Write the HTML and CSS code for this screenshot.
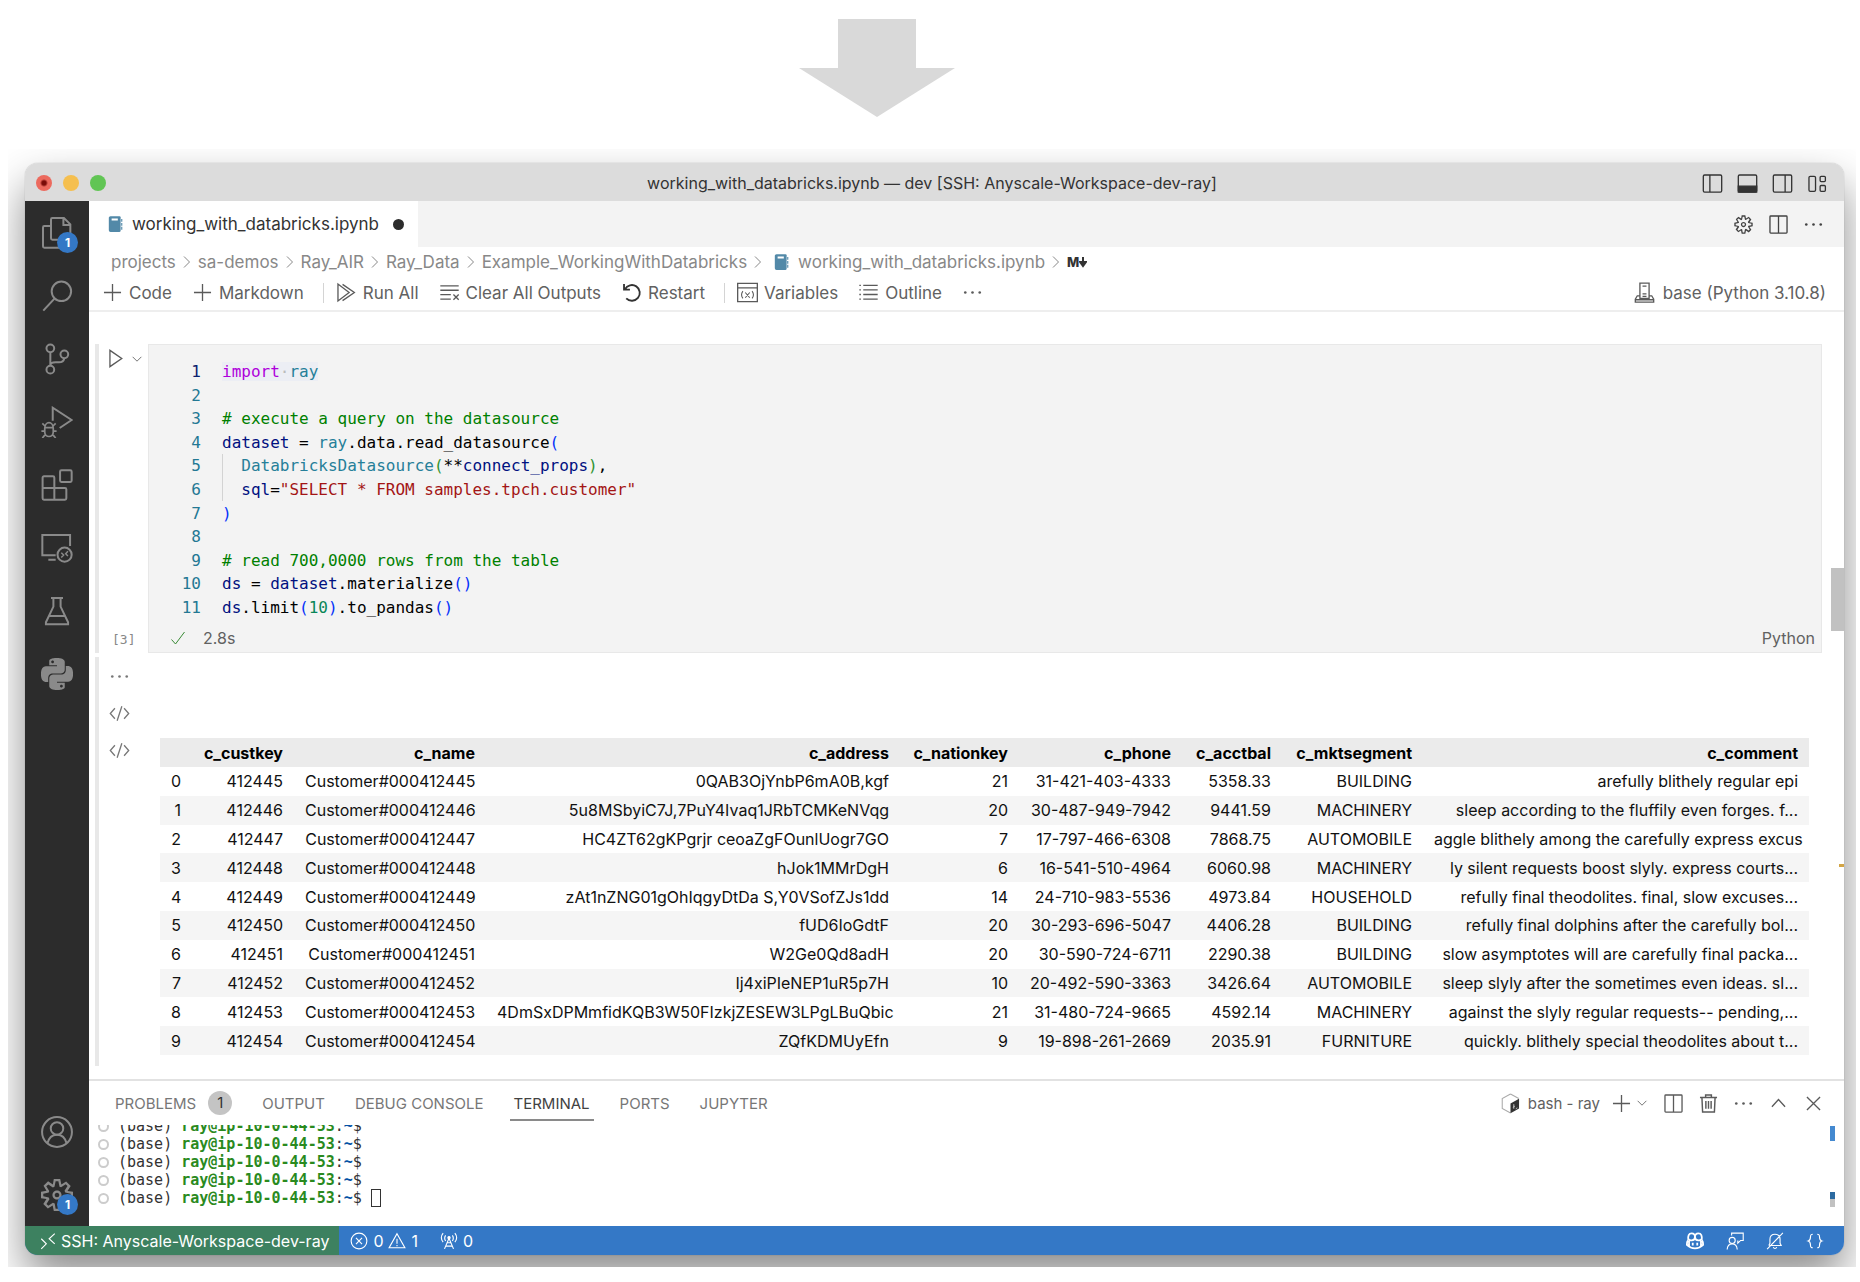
FILE: index.html
```html
<!DOCTYPE html>
<html lang="en">
<head>
  <meta charset="UTF-8">
  <title>working_with_databricks.ipynb — dev</title>
  <link rel="stylesheet" href="styles.css">
</head>
<body>

<!-- shared icons -->
<svg class="sprite" aria-hidden="true">
  <symbol id="i-gear" viewBox="0 0 16 16"><path fill="currentColor" stroke="none" fill-rule="evenodd" d="M9.1 4.4L8.6 2H7.4l-.5 2.4-.7.3-2-1.3-.9.8 1.3 2-.2.7-2.4.5v1.2l2.4.5.3.8-1.3 2 .8.8 2-1.3.8.3.4 2.3h1.2l.5-2.4.8-.3 2 1.3.8-.8-1.3-2 .3-.8 2.3-.4V7.4l-2.4-.5-.3-.8 1.3-2-.8-.8-2 1.3-.7-.2zM9.4 1l.5 2.4L12 2.1l2 2-1.4 2.1 2.4.4v2.8l-2.4.5L14 12l-2 2-2.1-1.4-.5 2.4H6.6l-.5-2.4L4 13.9l-2-2 1.4-2.1L1 9.4V6.6l2.4-.5L2.1 4l2-2 2.1 1.4.4-2.4h2.8zm.6 7c0 1.1-.9 2-2 2s-2-.9-2-2 .9-2 2-2 2 .9 2 2zM8 9c.6 0 1-.4 1-1s-.4-1-1-1-1 .4-1 1 .4 1 1 1z"/></symbol>
  <symbol id="i-split" viewBox="0 0 16 16"><rect x="1.5" y="1.5" width="13" height="13" rx=".6"/><path d="M8 1.5v13"/></symbol>
  <symbol id="i-dots" viewBox="0 0 16 16"><g fill="currentColor" stroke="none"><circle cx="2.5" cy="8" r="1"/><circle cx="8" cy="8" r="1"/><circle cx="13.5" cy="8" r="1"/></g></symbol>
  <symbol id="i-plus" viewBox="0 0 16 16"><path d="M8 1.5v13M1.5 8h13"/></symbol>
  <symbol id="i-down" viewBox="0 0 16 16"><path d="M3 5.5l5 5 5-5"/></symbol>
  <symbol id="i-sep" viewBox="0 0 16 16"><path d="M5 2.5L10.500 8 5 13.500"/></symbol>
  <symbol id="i-book" viewBox="0 0 16 16"><g fill="#5289a8" stroke="none"><path d="M4 1h8a1 1 0 0 1 1 1v12a1 1 0 0 1-1 1H4a1.500 1.500 0 0 1-1.500-1.500v-11A1.500 1.500 0 0 1 4 1z"/><path d="M13.500 3.500h1v2.500h-1zM13.500 7h1v2.500h-1zM13.500 10.500h1V13h-1z"/></g><path d="M5 4h5.500" stroke="#fff" stroke-width="1.800"/></symbol>
  <symbol id="i-code" viewBox="0 0 16 16"><path d="M4.500 4L1 8l3.500 4M11.500 4L15 8l-3.500 4M9.800 2.500l-3.600 11"/></symbol>
</svg>

<div class="arrow">
  <svg width="156" height="98" viewBox="0 0 156 98"><path fill="#d9d9d9" d="M39 0h78v49h39L78 98 0 49h39z"/></svg>
</div>

<div class="stage">
<div class="window">

  <header class="titlebar">
    <div class="lights">
      <span class="light red"></span><span class="light yellow"></span><span class="light green"></span>
    </div>
    <div class="title">working_with_databricks.ipynb — dev [SSH: Anyscale-Workspace-dev-ray]</div>
    <div class="layout-btns">
      <button aria-label="Toggle side bar"><svg class="icon" viewBox="0 0 16 16"><rect x="1" y="1.500" width="14" height="13" rx="1"/><path d="M6 1.500v13"/></svg></button>
      <button aria-label="Toggle panel"><svg class="icon" viewBox="0 0 16 16"><rect x="1" y="1.500" width="14" height="13" rx="1"/><path fill="currentColor" d="M1 10h14v4.500H1z"/></svg></button>
      <button aria-label="Toggle secondary side bar"><svg class="icon" viewBox="0 0 16 16"><rect x="1" y="1.500" width="14" height="13" rx="1"/><path d="M10 1.500v13"/></svg></button>
      <button aria-label="Customize layout"><svg class="icon" viewBox="0 0 16 16"><rect x="1.500" y="2.500" width="5" height="11.500" rx="1"/><rect x="10" y="2.500" width="4" height="4" rx=".8"/><rect x="10" y="9.500" width="4" height="4.500" rx=".8"/></svg></button>
    </div>
  </header>

  <div class="main">
    <nav class="activity">
      <button aria-label="Explorer"><svg viewBox="0 0 24 24"><path d="M8.500.8h8.700L22 5.500V16a1 1 0 0 1-1 1H8.500a1 1 0 0 1-1-1V1.800a1 1 0 0 1 1-1zM16.800 1v5H22M7.500 6.800h-5a1 1 0 0 0-1 1V22a1 1 0 0 0 1 1H15a1 1 0 0 0 1-1v-5"/></svg><span class="badge">1</span></button>
      <button aria-label="Search"><svg viewBox="0 0 24 24"><circle cx="15.300" cy="8.500" r="7.300"/><path d="M10.300 13.800L1.700 23"/></svg></button>
      <button aria-label="Source control"><svg viewBox="0 0 24 24"><circle cx="7" cy="4" r="2.900"/><circle cx="7" cy="20" r="2.900"/><circle cx="17.500" cy="8.500" r="2.900"/><path d="M7 7v10M17.500 11.400c-.5 2.300-1.500 3.100-4 3.100H11c-2.500 0-4 1-4 2.500"/></svg></button>
      <button aria-label="Run and debug"><svg viewBox="0 0 24 24"><path d="M8.800 11V1.300L23 10.500l-9 6"/><path d="M2.800 17c0-6 6.400-6 6.400 0v2.500c0 4.500-6.400 4.500-6.400 0zM2.800 16.300h6.400M.3 18.800h2.500M9.200 18.800h2.500M1 13l2 2M11 13l-2 2M1 24l2.200-2.500M11 24l-2.200-2.500" stroke-width="1.300"/></svg></button>
      <button aria-label="Extensions"><svg viewBox="0 0 24 24"><path d="M1.200 6.500a1 1 0 0 1 1-1H9a1 1 0 0 1 1 1v7.700h8a1 1 0 0 1 1 1v6.800a1 1 0 0 1-1 1H2.200a1 1 0 0 1-1-1zM1.200 14.200H10V23"/><rect x="14.300" y="1" width="8.700" height="8.700" rx="1"/></svg></button>
      <button aria-label="Remote explorer"><svg viewBox="0 0 24 24"><path d="M11 17.500H1V2.200h20.800v8.300M5.500 20.800H11"/><circle cx="17.700" cy="17" r="5.300"/><path d="M15.200 15.500l1.800 1.800-1.800 1.800M20.200 14.500l-1.700 1.800 1.700 1.700" stroke-width="1.100"/></svg></button>
      <button aria-label="Testing"><svg viewBox="0 0 24 24"><path d="M7.500 2.200h9M9.300 2.200v6.500L3.700 20.500V22h16.600v-1.500L14.700 8.700V2.200M6.500 15.800h11"/></svg></button>
      <button aria-label="Python"><svg viewBox="0 0 24 24"><path fill="#8a8a8a" stroke="none" d="M14.250.18l.9.2.73.26.59.3.45.32.34.34.25.34.16.33.1.3.04.26.02.2-.01.13V8.500l-.05.63-.13.55-.21.46-.26.38-.3.31-.33.25-.35.19-.35.14-.33.1-.3.07-.26.04-.21.02H8.770l-.69.05-.59.14-.5.22-.41.27-.33.32-.27.35-.2.36-.15.37-.1.35-.07.32-.04.27-.02.21v3.060H3.170l-.21-.03-.28-.07-.32-.12-.35-.18-.36-.26-.36-.36-.35-.46-.32-.59-.28-.73-.21-.88-.14-1.050-.05-1.230.06-1.220.16-1.040.24-.87.32-.71.36-.57.4-.44.42-.33.42-.24.4-.16.36-.1.32-.05.24-.01h.16l.06.01h8.160v-.83H6.180l-.01-2.750-.02-.37.05-.34.11-.31.17-.28.25-.26.31-.23.38-.2.44-.18.51-.15.58-.12.64-.1.71-.06.77-.04.84-.02 1.270.05zm-6.300 1.980l-.23.33-.08.41.08.41.23.34.33.22.41.09.41-.09.33-.22.23-.34.08-.41-.08-.41-.23-.33-.33-.22-.41-.09-.41.09zm13.090 3.950l.28.06.32.12.35.18.36.27.36.35.35.47.32.59.28.73.21.88.14 1.040.05 1.230-.06 1.230-.16 1.040-.24.86-.32.71-.36.57-.4.45-.42.33-.42.24-.4.16-.36.09-.32.05-.24.02-.16-.01h-8.220v.82h5.840l.01 2.760.02.36-.05.34-.11.31-.17.29-.25.25-.31.24-.38.2-.44.17-.51.15-.58.13-.64.09-.71.07-.77.04-.84.01-1.270-.04-1.070-.14-.9-.2-.73-.25-.59-.3-.45-.33-.34-.34-.25-.34-.16-.33-.1-.3-.04-.25-.02-.2.01-.13v-5.340l.05-.64.13-.54.21-.46.26-.38.3-.32.33-.24.35-.2.35-.14.33-.1.3-.06.26-.04.21-.02.13-.01h5.840l.69-.05.59-.14.5-.21.41-.28.33-.32.27-.35.2-.36.15-.36.1-.35.07-.32.04-.28.02-.21V6.070h2.090l.14.01zm-6.470 14.250l-.23.33-.08.41.08.41.23.33.33.23.41.08.41-.08.33-.23.23-.33.08-.41-.08-.41-.23-.33-.33-.23-.41-.08-.41.08z"/></svg></button>
      <span class="spacer"></span>
      <button aria-label="Accounts"><svg viewBox="0 0 24 24"><circle cx="12" cy="12" r="11.200"/><circle cx="12" cy="9.300" r="4.700"/><path d="M4.800 20.500c1-4 3.700-6.500 7.200-6.500s6.200 2.500 7.200 6.500"/></svg></button>
      <button aria-label="Manage"><svg viewBox="0 0 14 14"><use href="#i-gear" x="-1" y="-1" width="16" height="16"/></svg><span class="badge">1</span></button>
    </nav>

    <div class="editor">
      <div class="tabs">
        <div class="tab"><svg class="icon small"><use href="#i-book"/></svg>working_with_databricks.ipynb<span class="dirty"></span></div>
        <div class="tab-actions">
          <button aria-label="Notebook settings"><svg class="icon"><use href="#i-gear"/></svg></button>
          <button aria-label="Split editor"><svg class="icon"><use href="#i-split"/></svg></button>
          <button aria-label="More actions"><svg class="icon"><use href="#i-dots"/></svg></button>
        </div>
      </div>

      <div class="crumbs">
        <a href="#">projects</a><svg class="sep"><use href="#i-sep"/></svg>
        <a href="#">sa-demos</a><svg class="sep"><use href="#i-sep"/></svg>
        <a href="#">Ray_AIR</a><svg class="sep"><use href="#i-sep"/></svg>
        <a href="#">Ray_Data</a><svg class="sep"><use href="#i-sep"/></svg>
        <a href="#">Example_WorkingWithDatabricks</a><svg class="sep"><use href="#i-sep"/></svg>
        <a href="#" class="file"><svg class="icon small"><use href="#i-book"/></svg>working_with_databricks.ipynb</a><svg class="sep"><use href="#i-sep"/></svg>
        <a href="#" class="md">M<svg width="8" height="12" viewBox="0 0 8 12"><path d="M4 1v8M1 6l3 4 3-4z" stroke="#333" stroke-width="2" fill="#333"/></svg></a>
      </div>

      <div class="toolbar">
        <button><svg class="icon"><use href="#i-plus"/></svg>Code</button>
        <button><svg class="icon"><use href="#i-plus"/></svg>Markdown</button>
        <span class="divider"></span>
        <button><svg class="icon" viewBox="0 0 16 16"><path d="M1.500 14.500v-13L10 8zM5 1.800L14 8l-9 6.200"/></svg>Run All</button>
        <button><svg class="icon" viewBox="0 0 16 16"><path d="M1 3h14M1 6.300h14M1 9.600h8M1 13h8M11 9.500l4 4M15 9.500l-4 4"/></svg>Clear All Outputs</button>
        <button><svg class="icon dark" viewBox="0 0 16 16"><path d="M3 5.500A6 6 0 1 1 4 12.500M2.300 1.500v4.300h4.500" stroke-width="1.400"/></svg>Restart</button>
        <span class="divider"></span>
        <button><svg class="icon" viewBox="0 0 16 16"><path d="M.5 1h15v14H.5zM.5 4.500h15"/><path d="M4.500 7c-1.500 2-1.500 3.500 0 5.500M11.500 7c1.500 2 1.500 3.500 0 5.500M6.300 8l3.400 4M9.700 8l-3.400 4" stroke-width=".8"/></svg>Variables</button>
        <button><svg class="icon" viewBox="0 0 16 16"><path d="M4 2.500h11M4 6h11M4 9.500h11M4 13h11M1 2.500h1.200M1 6h1.200M1 9.500h1.200M1 13h1.200"/></svg>Outline</button>
        <button aria-label="More"><svg class="icon"><use href="#i-dots"/></svg></button>
        <button class="kernel"><svg class="icon" viewBox="0 0 16 16"><path d="M4.500 12.500V.8h7v11.700zM6.500 3.200h3M6.500 9h3M6.500 11h3M4.500 10.500h-2L1 13v2.300h14V13l-1.500-2.500h-2M1 13.500h14"/></svg>base (Python 3.10.8)</button>
      </div>

      <div class="notebook">
        <div class="cell">
          <div class="gutter">
            <div class="run">
              <button aria-label="Run cell"><svg class="icon" viewBox="0 0 16 16"><path d="M3 1.800v12.400L12 8z"/></svg></button>
              <button aria-label="Run options"><svg class="chev"><use href="#i-down"/></svg></button>
            </div>
            <span class="count">[3]</span>
          </div>
          <div class="code-box">
            <ol class="code">
              <li><b class="n cur">1</b><code><span class="word"><i class="kw">import</i><i class="ws">·</i><i class="ty">ray</i></span></code></li>
              <li><b class="n">2</b><code></code></li>
              <li><b class="n">3</b><code class="cm"># execute a query on the datasource</code></li>
              <li><b class="n">4</b><code><i class="va">dataset</i> = <i class="ty">ray</i>.data.read_datasource<i class="b1">(</i></code></li>
              <li><b class="n">5</b><code class="guide"><i class="ty">DatabricksDatasource</i><i class="b2">(</i>**<i class="va">connect_props</i><i class="b2">)</i>,</code></li>
              <li><b class="n">6</b><code class="guide"><i class="va">sql</i>=<i class="st">"SELECT * FROM samples.tpch.customer"</i></code></li>
              <li><b class="n">7</b><code><i class="b1">)</i></code></li>
              <li><b class="n">8</b><code></code></li>
              <li><b class="n">9</b><code class="cm"># read 700,0000 rows from the table</code></li>
              <li><b class="n">10</b><code><i class="va">ds</i> = <i class="va">dataset</i>.materialize<i class="b1">()</i></code></li>
              <li><b class="n">11</b><code><i class="va">ds</i>.limit<i class="b1">(</i><i class="nu">10</i><i class="b1">)</i>.to_pandas<i class="b1">()</i></code></li>
            </ol>
            <div class="cell-status">
              <svg class="check" viewBox="0 0 16 16"><path d="M1.500 9.500l4 4.500 9-12"/></svg>
              <span>2.8s</span>
              <span class="lang">Python</span>
            </div>
          </div>
        </div>

        <div class="output">
          <div class="out-gutter">
            <button aria-label="Output actions"><svg class="icon"><use href="#i-dots"/></svg></button>
            <button aria-label="Change presentation"><svg class="icon"><use href="#i-code"/></svg></button>
            <button aria-label="Change presentation"><svg class="icon"><use href="#i-code"/></svg></button>
          </div>
          <div class="frame">
          <table>
            <colgroup>
              <col class="c-idx"><col class="c-key"><col class="c-name"><col><col class="c-nation"><col class="c-phone"><col class="c-bal"><col class="c-seg"><col class="c-comment">
            </colgroup>
            <thead>
              <tr><th></th><th>c_custkey</th><th>c_name</th><th>c_address</th><th>c_nationkey</th><th>c_phone</th><th>c_acctbal</th><th>c_mktsegment</th><th>c_comment</th></tr>
            </thead>
            <tbody>
              <tr><td>0</td><td>412445</td><td>Customer#000412445</td><td>0QAB3OjYnbP6mA0B,kgf</td><td>21</td><td>31-421-403-4333</td><td>5358.33</td><td>BUILDING</td><td>arefully blithely regular epi</td></tr>
              <tr><td>1</td><td>412446</td><td>Customer#000412446</td><td>5u8MSbyiC7J,7PuY4Ivaq1JRbTCMKeNVqg</td><td>20</td><td>30-487-949-7942</td><td>9441.59</td><td>MACHINERY</td><td>sleep according to the fluffily even forges. f...</td></tr>
              <tr><td>2</td><td>412447</td><td>Customer#000412447</td><td>HC4ZT62gKPgrjr ceoaZgFOunlUogr7GO</td><td>7</td><td>17-797-466-6308</td><td>7868.75</td><td>AUTOMOBILE</td><td>aggle blithely among the carefully express excus</td></tr>
              <tr><td>3</td><td>412448</td><td>Customer#000412448</td><td>hJok1MMrDgH</td><td>6</td><td>16-541-510-4964</td><td>6060.98</td><td>MACHINERY</td><td>ly silent requests boost slyly. express courts...</td></tr>
              <tr><td>4</td><td>412449</td><td>Customer#000412449</td><td>zAt1nZNG01gOhIqgyDtDa S,Y0VSofZJs1dd</td><td>14</td><td>24-710-983-5536</td><td>4973.84</td><td>HOUSEHOLD</td><td>refully final theodolites. final, slow excuses...</td></tr>
              <tr><td>5</td><td>412450</td><td>Customer#000412450</td><td>fUD6IoGdtF</td><td>20</td><td>30-293-696-5047</td><td>4406.28</td><td>BUILDING</td><td>refully final dolphins after the carefully bol...</td></tr>
              <tr><td>6</td><td>412451</td><td>Customer#000412451</td><td>W2Ge0Qd8adH</td><td>20</td><td>30-590-724-6711</td><td>2290.38</td><td>BUILDING</td><td>slow asymptotes will are carefully final packa...</td></tr>
              <tr><td>7</td><td>412452</td><td>Customer#000412452</td><td>Ij4xiPIeNEP1uR5p7H</td><td>10</td><td>20-492-590-3363</td><td>3426.64</td><td>AUTOMOBILE</td><td>sleep slyly after the sometimes even ideas. sl...</td></tr>
              <tr><td>8</td><td>412453</td><td>Customer#000412453</td><td>4DmSxDPMmfidKQB3W50FIzkjZESEW3LPgLBuQbic</td><td>21</td><td>31-480-724-9665</td><td>4592.14</td><td>MACHINERY</td><td>against the slyly regular requests-- pending,...</td></tr>
              <tr><td>9</td><td>412454</td><td>Customer#000412454</td><td>ZQfKDMUyEfn</td><td>9</td><td>19-898-261-2669</td><td>2035.91</td><td>FURNITURE</td><td>quickly. blithely special theodolites about t...</td></tr>
            </tbody>
          </table>
          </div>
        </div>
        <span class="thumb"></span>
        <span class="mark"></span>
      </div>

      <section class="panel">
        <div class="panel-head">
          <button class="ptab">PROBLEMS<span class="num">1</span></button>
          <button class="ptab">OUTPUT</button>
          <button class="ptab">DEBUG CONSOLE</button>
          <button class="ptab active">TERMINAL</button>
          <button class="ptab">PORTS</button>
          <button class="ptab">JUPYTER</button>
          <div class="panel-actions">
            <button class="shell"><svg class="icon" viewBox="0 0 16 16"><path d="M8 .7L1.700 4.200v7.600L8 15.300M8 .7l6.300 3.500" stroke="#aaa" stroke-width=".8"/><path d="M8 8l6.500-3.700v7.500L8 15.500z" fill="#333" stroke="none"/><path d="M10.500 8.500v3.500M9.800 11l1.500-1M12 12l1.200-.7" stroke="#ccc" stroke-width=".7"/></svg>bash - ray</button>
            <button class="new" aria-label="New terminal"><svg class="icon"><use href="#i-plus"/></svg></button>
            <button aria-label="Launch profile"><svg class="chev"><use href="#i-down"/></svg></button>
            <button aria-label="Split terminal"><svg class="icon"><use href="#i-split"/></svg></button>
            <button aria-label="Kill terminal"><svg class="icon" viewBox="0 0 16 16"><path d="M3 3.500l.5 11h9l.5-11M1.500 3.500h13M5.800 3.500v-2h4.400v2M6 6v6M8 6v6M10 6v6" stroke-width="1.100"/></svg></button>
            <button aria-label="More"><svg class="icon"><use href="#i-dots"/></svg></button>
            <button aria-label="Maximize panel"><svg class="icon" viewBox="0 0 16 16"><path d="M3 10.500l5-5.500 5 5.500"/></svg></button>
            <button aria-label="Close panel"><svg class="icon" viewBox="0 0 16 16"><path d="M3 3l10 10M13 3L3 13"/></svg></button>
          </div>
        </div>
        <div class="terminal">
          <div class="line"><span class="ring"></span>(base) <b>ray@ip-10-0-44-53</b>:<i>~</i>$</div>
          <div class="line"><span class="ring"></span>(base) <b>ray@ip-10-0-44-53</b>:<i>~</i>$</div>
          <div class="line"><span class="ring"></span>(base) <b>ray@ip-10-0-44-53</b>:<i>~</i>$</div>
          <div class="line"><span class="ring"></span>(base) <b>ray@ip-10-0-44-53</b>:<i>~</i>$</div>
          <div class="line"><span class="ring"></span>(base) <b>ray@ip-10-0-44-53</b>:<i>~</i>$ <span class="caret"></span></div>
          <span class="tmark top"></span>
          <span class="tmark bottom"></span>
        </div>
      </section>
    </div>
  </div>

  <footer class="statusbar">
    <button class="remote"><svg class="sicon" viewBox="0 0 16 16"><path d="M2 6l4.500 4.500L2 15M14 1.500L9 6l5 4.500"/></svg>SSH: Anyscale-Workspace-dev-ray</button>
    <button class="problems"><svg class="sicon" viewBox="0 0 16 16"><circle cx="8" cy="8" r="7"/><path d="M5.300 5.300l5.400 5.400M10.700 5.300l-5.400 5.400"/></svg>0<svg class="sicon" viewBox="0 0 16 16"><path d="M8 1.500l7 12.500H1zM8 6v4.500M8 11.500v1.200"/></svg>1</button>
    <button class="ports"><svg class="sicon" viewBox="0 0 16 16"><path d="M8 5.500L4 15M8 5.500L12 15M6.500 9.500h3M5.300 12.500h5.400M5 8C4 6.500 4 4.500 5 3M11 8c1-1.500 1-3.500 0-5M2.800 9C.8 6.500.8 3.500 2.800 1M13.200 9c2-2.500 2-5.500 0-8"/><circle cx="8" cy="5" r="1" fill="#fff"/></svg>0</button>
    <div class="status-right">
      <button aria-label="Copilot"><svg class="sicon" viewBox="0 0 16 16"><path d="M2 7.500C1.500 3 2.500 1.300 5 1.300S8 2.500 8 4.500 7 7.500 5 7.500 2.300 7 2 6M14 7.500c.5-4.500-.5-6.200-3-6.200S8 2.500 8 4.500s1 3 3 3 2.700-.5 3-1.500M2 7.500C.8 8 .8 9 .8 11.500c2 2 4.500 3 7.200 3s5.200-1 7.200-3c0-2.500 0-3.500-1.200-4M2.700 8v4.500M13.300 8v4.500M6 9.500v2.500M10 9.500v2.500" stroke-width="1.600"/></svg></button>
      <button aria-label="Feedback"><svg class="sicon" viewBox="0 0 16 16"><circle cx="5.500" cy="7.500" r="2.700"/><path d="M1 15.500c.3-3.500 2-5 4.500-5s4.200 1.500 4.500 5M5 3V1h10.300v6.500H13L10.500 10V7.500"/></svg></button>
      <button aria-label="Notifications"><svg class="sicon" viewBox="0 0 16 16"><path d="M3 12h10.500l-1-2V6.500C12.500 3.500 10.500 2 8 2S3.500 3.500 3.500 6.500V10L2.500 12M6.500 13.500c.5 1.500 2.500 1.500 3 0M15 .8L1 15.300"/></svg></button>
      <button aria-label="Prettier"><svg class="sicon" viewBox="0 0 16 16"><path d="M6 2C4.200 2 4 2.500 4 4.300 4 6.500 3.800 7.500 2 8c1.800.5 2 1.500 2 3.700C4 13.500 4.200 14 6 14M10 2c1.800 0 2 .5 2 2.300 0 2.200.2 3.200 2 3.700-1.800.5-2 1.500-2 3.700 0 1.800-.2 2.300-2 2.300"/></svg></button>
    </div>
  </footer>

</div>
</div>

</body>
</html>
```
FILE: styles.css
```css
* { box-sizing: border-box; }
body {
  margin: 0;
  min-height: 100vh;
  display: flex;
  flex-direction: column;
  background: #fff;
  font-family: Inter, "Liberation Sans", sans-serif;
  font-size: 17px;
  color: #616161;
}
button {
  display: flex;
  align-items: center;
  padding: 0;
  border: none;
  background: none;
  color: inherit;
  font: inherit;
  white-space: nowrap;
  cursor: pointer;
}
a { color: inherit; text-decoration: none; }
svg {
  flex: none;
  fill: none;
  stroke: currentColor;
}
i { font-style: normal; }
.sprite { position: absolute; width: 0; height: 0; }
.icon { width: 21px; height: 21px; color: #5a5a5a; }
.icon.small { width: 18px; height: 18px; }
.icon.dark { color: #333; }
.chev { width: 14px; height: 14px; }

.arrow {
  height: 149px;
  padding: 19px 106px 0 0;
  text-align: center;
}
.arrow svg { stroke: none; }

/* window and its clipped shadow */
.stage {
  flex: 1;
  display: flex;
  margin: 0 4px 15px 8px;
  padding: 14px 12px 12px 17px;
  overflow: hidden;
}
.window {
  flex: 1;
  min-width: 0;
  display: flex;
  flex-direction: column;
  border-radius: 13px;
  box-shadow: 0 0 1px rgba(0,0,0,0.4), 0 22px 44px rgba(0,0,0,0.45);
}
.titlebar {
  display: grid;
  grid-template-columns: 1fr auto 1fr;
  align-items: center;
  height: 38px;
  padding: 2px 16px 0 11px;
  border-radius: 13px 13px 0 0;
  background: #dcdcdc;
}
.lights { display: flex; gap: 11px; }
.light { width: 16px; height: 16px; border-radius: 50%; }
.red { background: radial-gradient(circle, #7a0c08 0 2px, #ec6a5e 4px); }
.yellow { background: #f5bf4f; }
.green { background: #61c554; }
.title { color: #333; font-size: 16px; }
.layout-btns { display: flex; justify-content: flex-end; gap: 14px; }
.layout-btns .icon { color: #333; }

.main { flex: 1; display: flex; }
.activity {
  display: flex;
  flex-direction: column;
  width: 64px;
  background: #2c2c2c;
  color: #8a8a8a;
}
.activity button {
  position: relative;
  justify-content: center;
  height: 63px;
}
.activity svg { width: 32px; height: 32px; stroke-width: 1.5; }
.spacer { flex: 1; }
.badge {
  position: absolute;
  right: 11px;
  bottom: 11px;
  width: 21px;
  height: 21px;
  border-radius: 50%;
  background: #3478c6;
  color: #fff;
  font-size: 12px;
  font-weight: 700;
  line-height: 21px;
}

.editor {
  flex: 1;
  min-width: 0;
  display: flex;
  flex-direction: column;
  background: #fff;
}
.tabs {
  display: flex;
  justify-content: space-between;
  height: 46px;
  background: #f3f3f3;
}
.tab {
  display: flex;
  align-items: center;
  gap: 8px;
  padding: 0 14px 0 17px;
  background: #fff;
  color: #333;
}
.dirty {
  width: 11px;
  height: 11px;
  margin-left: 6px;
  border-radius: 50%;
  background: #2c2c2c;
}
.tab-actions {
  display: flex;
  align-items: center;
  gap: 14px;
  padding-right: 20px;
}
.tab-actions .icon { color: #424242; }

.crumbs {
  display: flex;
  align-items: center;
  gap: 3px;
  height: 29px;
  padding-left: 22px;
  color: #888;
}
.sep { width: 16px; height: 16px; }
.file { display: flex; align-items: center; gap: 8px; padding-left: 3px; }
.md {
  display: flex;
  align-items: center;
  color: #333;
  font-size: 13px;
  font-weight: 800;
}
.toolbar {
  display: flex;
  align-items: center;
  gap: 20px;
  height: 36px;
  padding: 0 18px 1px 13px;
  border-bottom: 2px solid #eee;
}
.toolbar button { gap: 6px; }
.divider { width: 1px; height: 20px; margin: 0 -8px 0 -1px; background: #d4d4d4; }
.toolbar .kernel { gap: 8px; margin-left: auto; }

.notebook {
  position: relative;
  flex: 1;
  padding: 32px 22px 12px 6px;
}
.cell { display: flex; border-left: 4px solid #e8e8e8; }
.gutter {
  display: flex;
  flex-direction: column;
  justify-content: space-between;
  width: 49px;
  padding: 4px 4px 6px 7px;
}
.run { display: flex; gap: 3px; }
.count {
  padding: 0 3px 0 6px;
  color: #888;
  font-family: "DejaVu Sans Mono", monospace;
  font-size: 13px;
}
.code-box {
  flex: 1;
  border: 1px solid #e8e8e8;
  background: #f3f3f3;
}
.code {
  display: grid;
  grid-auto-rows: 1fr;
  height: 274px;
  margin: 0;
  padding: 15px 0 0;
  list-style: none;
  font-family: "DejaVu Sans Mono", monospace;
  font-size: 16px;
  color: #000;
}
.code li { display: flex; align-items: stretch; }
.code code { display: flex; align-items: center; font: inherit; white-space: pre; }
.n {
  display: flex;
  align-items: center;
  justify-content: flex-end;
  width: 52px;
  margin-right: 21px;
  color: #237893;
  font-weight: 400;
}
.n.cur { color: #0b216f; }
.word { background: #eceef4; }
.code .guide { padding-left: 2ch; box-shadow: inset 1px 0 #d3d3d3; }
.kw { color: #af00db; }
.ws { color: #bbb; }
.ty { color: #267f99; }
.cm { color: #008000; }
.va { color: #001080; }
.st { color: #a31515; }
.nu { color: #098658; }
.b1 { color: #0431fa; }
.b2 { color: #319331; }
.cell-status {
  display: flex;
  align-items: center;
  gap: 17px;
  height: 33px;
  padding: 4px 6px 0 21px;
  font-size: 16px;
}
.check { width: 16px; height: 16px; color: #388a34; }
.lang { margin-left: auto; }

.output {
  display: flex;
  margin-top: 4px;
  padding: 0 13px 11px 0;
  border-left: 4px solid #e8e8e8;
}
.out-gutter {
  display: flex;
  flex-direction: column;
  gap: 16px;
  width: 61px;
  padding: 9px 0 0 10px;
}
.out-gutter .icon { color: #777; }
.frame { flex: 1; min-width: 0; padding-top: 81px; }
table {
  width: 100%;
  height: 317px;
  border-collapse: collapse;
  table-layout: fixed;
  color: #111;
  font-size: 16px;
  text-align: right;
}
th, td { padding: 0 11px; white-space: nowrap; }
th { height: 29px; }
thead tr { background: #ebebeb; color: #000; }
tbody tr:nth-child(even) { background: #f5f5f5; }
.c-idx { width: 32px; }
.c-key { width: 102px; }
.c-name { width: 192px; }
.c-nation { width: 119px; }
.c-phone { width: 163px; }
.c-bal { width: 100px; }
.c-seg { width: 141px; }
.c-comment { width: 386px; }

/* scrollbar slider and overview marks */
.thumb {
  position: absolute;
  top: 256px;
  right: 0;
  width: 13px;
  height: 63px;
  background: #c1c1c1;
}
.mark {
  position: absolute;
  top: 552px;
  right: 0;
  width: 5px;
  height: 3px;
  background: #d3a546;
}

.panel { border-top: 2px solid #e2e2e2; }
.panel-head {
  display: flex;
  align-items: center;
  gap: 22px;
  height: 44px;
  padding: 0 20px 0 22px;
  font-size: 15px;
}
.ptab {
  height: 36px;
  padding: 0 4px;
  border-top: 2px solid transparent;
  border-bottom: 2px solid transparent;
  color: #777;
}
.ptab.active { border-bottom-color: #8a8a8a; color: #424242; }
.num {
  width: 24px;
  height: 24px;
  margin-left: 12px;
  border-radius: 50%;
  background: #c4c4c4;
  color: #333;
  line-height: 24px;
}
.panel-actions {
  display: flex;
  align-items: center;
  gap: 14px;
  margin-left: auto;
}
.shell { gap: 7px; margin-right: -3px; }
.new { margin-right: -11px; }
.terminal {
  position: relative;
  display: flex;
  flex-direction: column;
  justify-content: flex-end;
  height: 101px;
  padding: 0 0 19px 9px;
  overflow: hidden;
  color: #333;
  font-family: "DejaVu Sans Mono", monospace;
  font-size: 15px;
}
.line {
  flex: none;
  display: flex;
  align-items: center;
  height: 18px;
  white-space: pre;
}
.line b { color: #2a8a1e; }
.line i { color: #0451a5; font-weight: 700; }
.ring {
  width: 11px;
  height: 11px;
  margin-right: 9px;
  border: 2px solid #ccc;
  border-radius: 50%;
}
.caret { width: 10px; height: 18px; border: 1px solid #333; }
.tmark { position: absolute; right: 9px; width: 5px; height: 15px; }
.tmark.top { top: 1px; background: #4489d0; }
.tmark.bottom { top: 67px; background: linear-gradient(#2c6aa0 50%, #c1c1c1 50%); }

.statusbar {
  display: flex;
  height: 29px;
  border-radius: 0 0 13px 13px;
  background: #3478c6;
  color: #fff;
  font-size: 16px;
  overflow: hidden;
}
.sicon { width: 18px; height: 18px; }
.remote {
  gap: 4px;
  padding: 0 10px 0 14px;
  background: #3d8160;
}
.problems { gap: 5px; padding: 0 22px 0 11px; }
.ports { gap: 5px; }
.status-right {
  display: flex;
  gap: 22px;
  margin-left: auto;
  padding-right: 20px;
}
```
